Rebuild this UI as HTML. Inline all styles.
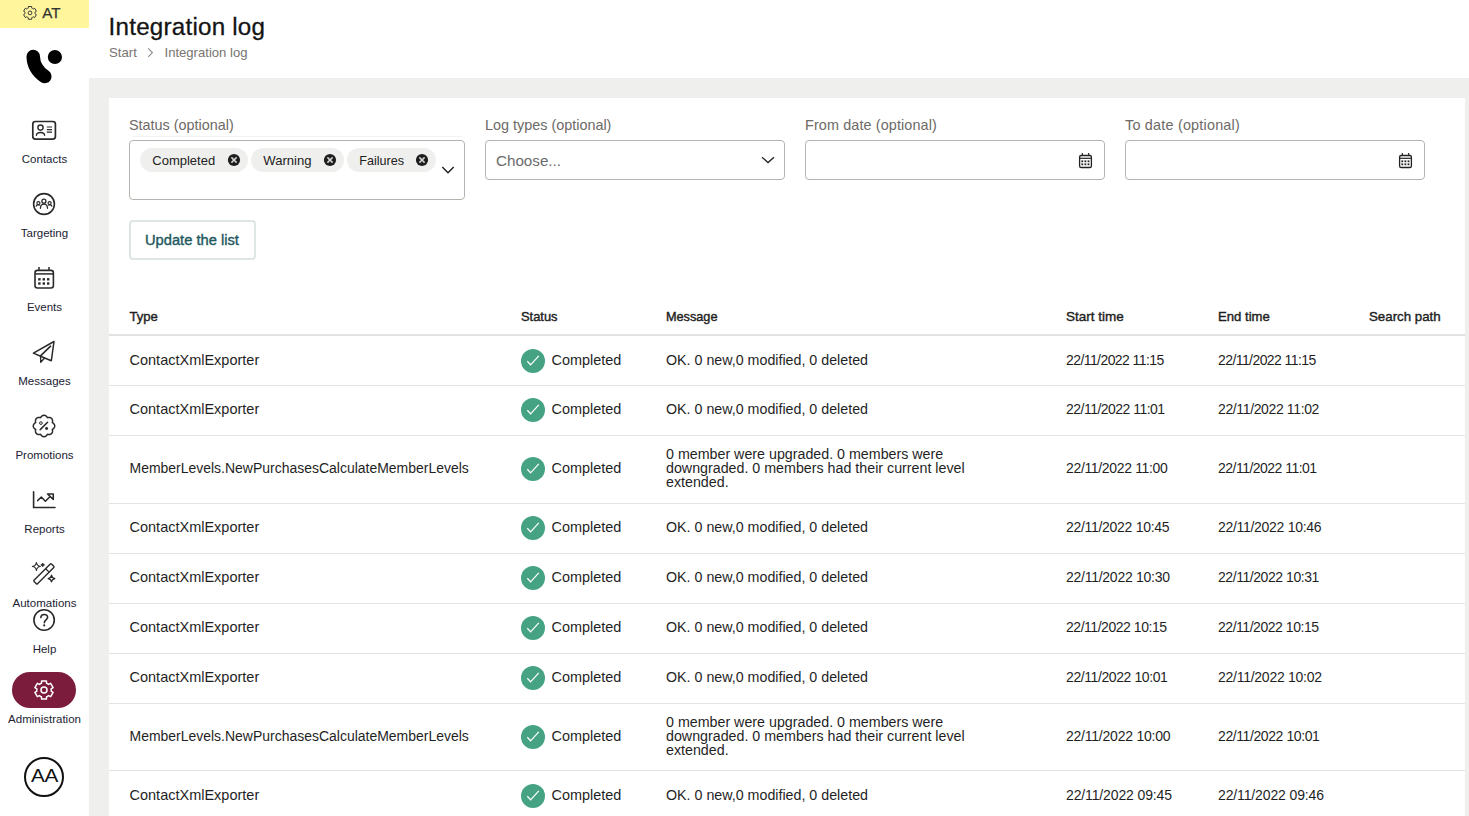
<!DOCTYPE html>
<html><head><meta charset="utf-8"><style>
html,body{margin:0;padding:0;}
body{width:1469px;height:816px;overflow:hidden;position:relative;background:#fff;font-family:"Liberation Sans", sans-serif;}
.t{position:absolute;white-space:nowrap;font-family:"Liberation Sans", sans-serif;}
svg{overflow:visible}
</style></head><body>
<div style="position:absolute;left:89px;top:78px;width:1380px;height:738px;background:#efefed"></div>
<div style="position:absolute;left:109px;top:98px;width:1356px;height:718px;background:#fff"></div>
<div style="position:absolute;left:0px;top:0px;width:89px;height:28px;background:#fff59d"></div>
<svg style="position:absolute;left:20px;top:3px;" width="20" height="20" viewBox="20 3 20 20"><path d="M28.21,8.23 L28.29,6.52 L31.71,6.52 L31.79,8.23 L32.03,8.33 L32.27,8.44 L32.50,8.57 L32.72,8.71 L32.94,8.85 L33.15,9.01 L34.67,8.23 L36.38,11.19 L34.94,12.12 L34.97,12.38 L34.99,12.64 L35.00,12.90 L34.99,13.16 L34.97,13.42 L34.94,13.68 L36.38,14.61 L34.67,17.57 L33.15,16.79 L32.94,16.95 L32.72,17.09 L32.50,17.23 L32.27,17.36 L32.03,17.47 L31.79,17.57 L31.71,19.28 L28.29,19.28 L28.21,17.57 L27.97,17.47 L27.73,17.36 L27.50,17.23 L27.28,17.09 L27.06,16.95 L26.85,16.79 L25.33,17.57 L23.62,14.61 L25.06,13.68 L25.03,13.42 L25.01,13.16 L25.00,12.90 L25.01,12.64 L25.03,12.38 L25.06,12.12 L23.62,11.19 L25.33,8.23 L26.85,9.01 L27.06,8.85 L27.28,8.71 L27.50,8.57 L27.73,8.44 L27.97,8.33 Z" fill="none" stroke="#3a3a3a" stroke-width="1.0" stroke-linejoin="round"/><circle cx="30" cy="12.9" r="1.9" fill="none" stroke="#3a3a3a" stroke-width="1.0"/></svg>
<div class="t" style="left:42.30px;top:4px;font-size:15.2px;line-height:17px;color:#333;font-weight:400;letter-spacing:0px;-webkit-text-stroke:0.25px #333">AT</div>
<svg style="position:absolute;left:20px;top:45px;" width="45" height="45" viewBox="20 45 45 45"><path d="M33.2,56.5 C33.5,66 38,72 44.8,76.5" stroke="#000" stroke-width="13.5" stroke-linecap="round" fill="none"/><circle cx="54.9" cy="57" r="7.1" fill="#000"/></svg>
<svg style="position:absolute;left:28px;top:116px;" width="34" height="30" viewBox="28 116 34 30"><rect x="32.8" y="121.5" width="22.6" height="17.6" rx="2.6" fill="none" stroke="#2a2a2a" stroke-width="1.7"/>
<circle cx="40.5" cy="127.6" r="2.6" fill="none" stroke="#2a2a2a" stroke-width="1.4"/>
<path d="M36.4,135.3 C36.6,131.5 44.4,131.5 44.6,135.3" fill="none" stroke="#2a2a2a" stroke-width="1.4" stroke-linecap="round"/>
<path d="M46.8,127 H52 M46.8,129.6 H52 M46.8,132.1 H52" stroke="#2a2a2a" stroke-width="1.1"/></svg>
<div class="t" style="left:0;width:89px;text-align:center;top:153px;font-size:11.5px;line-height:12px;color:#222233">Contacts</div>
<svg style="position:absolute;left:28px;top:188px;" width="34" height="34" viewBox="28 188 34 34"><circle cx="44" cy="204" r="10.4" fill="none" stroke="#2a2a2a" stroke-width="1.6"/>
<circle cx="43.9" cy="201.2" r="2.0" fill="none" stroke="#2a2a2a" stroke-width="1.3"/>
<path d="M40.4,208.3 C40.6,202.8 47.3,202.8 47.5,208.3" fill="none" stroke="#2a2a2a" stroke-width="1.3" stroke-linecap="round"/>
<circle cx="38.4" cy="203.1" r="1.55" fill="none" stroke="#2a2a2a" stroke-width="1.15"/>
<path d="M35.9,206.6 C36.3,205.2 37.2,204.6 38.6,204.6 L40.2,205.2" fill="none" stroke="#2a2a2a" stroke-width="1.15"/>
<circle cx="49.6" cy="203.1" r="1.55" fill="none" stroke="#2a2a2a" stroke-width="1.15"/>
<path d="M52.1,206.6 C51.7,205.2 50.8,204.6 49.4,204.6 L47.8,205.2" fill="none" stroke="#2a2a2a" stroke-width="1.15"/></svg>
<div class="t" style="left:0;width:89px;text-align:center;top:227px;font-size:11.5px;line-height:12px;color:#222233">Targeting</div>
<svg style="position:absolute;left:28px;top:262px;" width="34" height="32" viewBox="28 262 34 32"><rect x="35" y="270.4" width="18.4" height="17.6" rx="2.4" fill="none" stroke="#2a2a2a" stroke-width="1.6"/>
<path d="M35,273.9 H53.4" stroke="#2a2a2a" stroke-width="1.5"/>
<path d="M39,267 V271 M49,267 V271" stroke="#2a2a2a" stroke-width="1.5"/><rect x="38.199999999999996" y="278.1" width="2.4" height="2.4" fill="#2a2a2a"/><rect x="38.199999999999996" y="282.3" width="2.4" height="2.4" fill="#2a2a2a"/><rect x="42.599999999999994" y="278.1" width="2.4" height="2.4" fill="#2a2a2a"/><rect x="42.599999999999994" y="282.3" width="2.4" height="2.4" fill="#2a2a2a"/><rect x="47.0" y="278.1" width="2.4" height="2.4" fill="#2a2a2a"/><rect x="47.0" y="282.3" width="2.4" height="2.4" fill="#2a2a2a"/></svg>
<div class="t" style="left:0;width:89px;text-align:center;top:301px;font-size:11.5px;line-height:12px;color:#222233">Events</div>
<svg style="position:absolute;left:28px;top:336px;" width="34" height="32" viewBox="28 336 34 32"><path d="M54,341.5 L33.4,353.1 L40.6,356.2 L51.3,360.8 Z" fill="none" stroke="#2a2a2a" stroke-width="1.5" stroke-linejoin="round"/>
<path d="M50.6,346.2 L40.8,355.6" fill="none" stroke="#2a2a2a" stroke-width="1.6" stroke-linecap="round"/>
<path d="M40.6,356.2 L40.7,362.2 L44.4,358.3" fill="none" stroke="#2a2a2a" stroke-width="1.4" stroke-linejoin="round" stroke-linecap="round"/></svg>
<div class="t" style="left:0;width:89px;text-align:center;top:375px;font-size:11.5px;line-height:12px;color:#222233">Messages</div>
<svg style="position:absolute;left:28px;top:410px;" width="34" height="34" viewBox="28 410 34 34"><path d="M54.70,426.00 L54.70,426.09 L54.69,426.19 L54.69,426.28 L54.68,426.37 L54.66,426.47 L54.65,426.56 L54.63,426.65 L54.61,426.74 L54.58,426.83 L54.56,426.92 L54.53,427.01 L54.50,427.10 L54.46,427.19 L54.42,427.28 L54.38,427.37 L54.34,427.45 L54.30,427.54 L54.25,427.62 L54.20,427.71 L54.15,427.79 L54.09,427.87 L54.04,427.95 L53.98,428.03 L53.92,428.11 L53.85,428.18 L53.79,428.26 L53.72,428.33 L53.66,428.41 L53.59,428.48 L53.51,428.55 L53.44,428.62 L53.37,428.69 L53.29,428.75 L53.22,428.82 L53.14,428.88 L53.06,428.94 L52.98,429.00 L52.90,429.06 L52.82,429.12 L52.73,429.18 L52.65,429.23 L52.57,429.29 L52.48,429.34 L52.40,429.39 L52.31,429.44 L52.34,429.54 L52.36,429.64 L52.38,429.73 L52.40,429.83 L52.42,429.93 L52.44,430.03 L52.46,430.13 L52.47,430.22 L52.49,430.32 L52.50,430.42 L52.51,430.52 L52.52,430.62 L52.52,430.72 L52.53,430.82 L52.53,430.93 L52.53,431.03 L52.53,431.12 L52.53,431.22 L52.52,431.32 L52.51,431.42 L52.50,431.52 L52.49,431.62 L52.48,431.72 L52.46,431.81 L52.44,431.91 L52.42,432.00 L52.39,432.10 L52.37,432.19 L52.34,432.28 L52.31,432.38 L52.27,432.47 L52.24,432.55 L52.20,432.64 L52.16,432.73 L52.12,432.81 L52.07,432.90 L52.03,432.98 L51.98,433.06 L51.92,433.13 L51.87,433.21 L51.81,433.29 L51.75,433.36 L51.69,433.43 L51.63,433.50 L51.57,433.57 L51.50,433.63 L51.43,433.69 L51.36,433.75 L51.29,433.81 L51.21,433.87 L51.13,433.92 L51.06,433.98 L50.98,434.03 L50.90,434.07 L50.81,434.12 L50.73,434.16 L50.64,434.20 L50.55,434.24 L50.47,434.27 L50.38,434.31 L50.28,434.34 L50.19,434.37 L50.10,434.39 L50.00,434.42 L49.91,434.44 L49.81,434.46 L49.72,434.48 L49.62,434.49 L49.52,434.50 L49.42,434.51 L49.32,434.52 L49.22,434.53 L49.12,434.53 L49.03,434.53 L48.93,434.53 L48.82,434.53 L48.72,434.52 L48.62,434.52 L48.52,434.51 L48.42,434.50 L48.32,434.49 L48.22,434.47 L48.13,434.46 L48.03,434.44 L47.93,434.42 L47.83,434.40 L47.73,434.38 L47.64,434.36 L47.54,434.34 L47.44,434.31 L47.39,434.40 L47.34,434.48 L47.29,434.57 L47.23,434.65 L47.18,434.73 L47.12,434.82 L47.06,434.90 L47.00,434.98 L46.94,435.06 L46.88,435.14 L46.82,435.22 L46.75,435.29 L46.69,435.37 L46.62,435.44 L46.55,435.51 L46.48,435.59 L46.41,435.66 L46.33,435.72 L46.26,435.79 L46.18,435.85 L46.11,435.92 L46.03,435.98 L45.95,436.04 L45.87,436.09 L45.79,436.15 L45.71,436.20 L45.62,436.25 L45.54,436.30 L45.45,436.34 L45.37,436.38 L45.28,436.42 L45.19,436.46 L45.10,436.50 L45.01,436.53 L44.92,436.56 L44.83,436.58 L44.74,436.61 L44.65,436.63 L44.56,436.65 L44.47,436.66 L44.37,436.68 L44.28,436.69 L44.19,436.69 L44.09,436.70 L44.00,436.70 L43.91,436.70 L43.81,436.69 L43.72,436.69 L43.63,436.68 L43.53,436.66 L43.44,436.65 L43.35,436.63 L43.26,436.61 L43.17,436.58 L43.08,436.56 L42.99,436.53 L42.90,436.50 L42.81,436.46 L42.72,436.42 L42.63,436.38 L42.55,436.34 L42.46,436.30 L42.38,436.25 L42.29,436.20 L42.21,436.15 L42.13,436.09 L42.05,436.04 L41.97,435.98 L41.89,435.92 L41.82,435.85 L41.74,435.79 L41.67,435.72 L41.59,435.66 L41.52,435.59 L41.45,435.51 L41.38,435.44 L41.31,435.37 L41.25,435.29 L41.18,435.22 L41.12,435.14 L41.06,435.06 L41.00,434.98 L40.94,434.90 L40.88,434.82 L40.82,434.73 L40.77,434.65 L40.71,434.57 L40.66,434.48 L40.61,434.40 L40.56,434.31 L40.46,434.34 L40.36,434.36 L40.27,434.38 L40.17,434.40 L40.07,434.42 L39.97,434.44 L39.87,434.46 L39.78,434.47 L39.68,434.49 L39.58,434.50 L39.48,434.51 L39.38,434.52 L39.28,434.52 L39.18,434.53 L39.08,434.53 L38.97,434.53 L38.88,434.53 L38.78,434.53 L38.68,434.52 L38.58,434.51 L38.48,434.50 L38.38,434.49 L38.28,434.48 L38.19,434.46 L38.09,434.44 L38.00,434.42 L37.90,434.39 L37.81,434.37 L37.72,434.34 L37.62,434.31 L37.53,434.27 L37.45,434.24 L37.36,434.20 L37.27,434.16 L37.19,434.12 L37.10,434.07 L37.02,434.03 L36.94,433.98 L36.87,433.92 L36.79,433.87 L36.71,433.81 L36.64,433.75 L36.57,433.69 L36.50,433.63 L36.43,433.57 L36.37,433.50 L36.31,433.43 L36.25,433.36 L36.19,433.29 L36.13,433.21 L36.08,433.13 L36.02,433.06 L35.97,432.98 L35.93,432.90 L35.88,432.81 L35.84,432.73 L35.80,432.64 L35.76,432.55 L35.73,432.47 L35.69,432.38 L35.66,432.28 L35.63,432.19 L35.61,432.10 L35.58,432.00 L35.56,431.91 L35.54,431.81 L35.52,431.72 L35.51,431.62 L35.50,431.52 L35.49,431.42 L35.48,431.32 L35.47,431.22 L35.47,431.12 L35.47,431.03 L35.47,430.93 L35.47,430.82 L35.48,430.72 L35.48,430.62 L35.49,430.52 L35.50,430.42 L35.51,430.32 L35.53,430.22 L35.54,430.13 L35.56,430.03 L35.58,429.93 L35.60,429.83 L35.62,429.73 L35.64,429.64 L35.66,429.54 L35.69,429.44 L35.60,429.39 L35.52,429.34 L35.43,429.29 L35.35,429.23 L35.27,429.18 L35.18,429.12 L35.10,429.06 L35.02,429.00 L34.94,428.94 L34.86,428.88 L34.78,428.82 L34.71,428.75 L34.63,428.69 L34.56,428.62 L34.49,428.55 L34.41,428.48 L34.34,428.41 L34.28,428.33 L34.21,428.26 L34.15,428.18 L34.08,428.11 L34.02,428.03 L33.96,427.95 L33.91,427.87 L33.85,427.79 L33.80,427.71 L33.75,427.62 L33.70,427.54 L33.66,427.45 L33.62,427.37 L33.58,427.28 L33.54,427.19 L33.50,427.10 L33.47,427.01 L33.44,426.92 L33.42,426.83 L33.39,426.74 L33.37,426.65 L33.35,426.56 L33.34,426.47 L33.32,426.37 L33.31,426.28 L33.31,426.19 L33.30,426.09 L33.30,426.00 L33.30,425.91 L33.31,425.81 L33.31,425.72 L33.32,425.63 L33.34,425.53 L33.35,425.44 L33.37,425.35 L33.39,425.26 L33.42,425.17 L33.44,425.08 L33.47,424.99 L33.50,424.90 L33.54,424.81 L33.58,424.72 L33.62,424.63 L33.66,424.55 L33.70,424.46 L33.75,424.38 L33.80,424.29 L33.85,424.21 L33.91,424.13 L33.96,424.05 L34.02,423.97 L34.08,423.89 L34.15,423.82 L34.21,423.74 L34.28,423.67 L34.34,423.59 L34.41,423.52 L34.49,423.45 L34.56,423.38 L34.63,423.31 L34.71,423.25 L34.78,423.18 L34.86,423.12 L34.94,423.06 L35.02,423.00 L35.10,422.94 L35.18,422.88 L35.27,422.82 L35.35,422.77 L35.43,422.71 L35.52,422.66 L35.60,422.61 L35.69,422.56 L35.66,422.46 L35.64,422.36 L35.62,422.27 L35.60,422.17 L35.58,422.07 L35.56,421.97 L35.54,421.87 L35.53,421.78 L35.51,421.68 L35.50,421.58 L35.49,421.48 L35.48,421.38 L35.48,421.28 L35.47,421.18 L35.47,421.07 L35.47,420.97 L35.47,420.88 L35.47,420.78 L35.48,420.68 L35.49,420.58 L35.50,420.48 L35.51,420.38 L35.52,420.28 L35.54,420.19 L35.56,420.09 L35.58,420.00 L35.61,419.90 L35.63,419.81 L35.66,419.72 L35.69,419.62 L35.73,419.53 L35.76,419.45 L35.80,419.36 L35.84,419.27 L35.88,419.19 L35.93,419.10 L35.97,419.02 L36.02,418.94 L36.08,418.87 L36.13,418.79 L36.19,418.71 L36.25,418.64 L36.31,418.57 L36.37,418.50 L36.43,418.43 L36.50,418.37 L36.57,418.31 L36.64,418.25 L36.71,418.19 L36.79,418.13 L36.87,418.08 L36.94,418.02 L37.02,417.97 L37.10,417.93 L37.19,417.88 L37.27,417.84 L37.36,417.80 L37.45,417.76 L37.53,417.73 L37.62,417.69 L37.72,417.66 L37.81,417.63 L37.90,417.61 L38.00,417.58 L38.09,417.56 L38.19,417.54 L38.28,417.52 L38.38,417.51 L38.48,417.50 L38.58,417.49 L38.68,417.48 L38.78,417.47 L38.88,417.47 L38.97,417.47 L39.07,417.47 L39.18,417.47 L39.28,417.48 L39.38,417.48 L39.48,417.49 L39.58,417.50 L39.68,417.51 L39.78,417.53 L39.87,417.54 L39.97,417.56 L40.07,417.58 L40.17,417.60 L40.27,417.62 L40.36,417.64 L40.46,417.66 L40.56,417.69 L40.61,417.60 L40.66,417.52 L40.71,417.43 L40.77,417.35 L40.82,417.27 L40.88,417.18 L40.94,417.10 L41.00,417.02 L41.06,416.94 L41.12,416.86 L41.18,416.78 L41.25,416.71 L41.31,416.63 L41.38,416.56 L41.45,416.49 L41.52,416.41 L41.59,416.34 L41.67,416.28 L41.74,416.21 L41.82,416.15 L41.89,416.08 L41.97,416.02 L42.05,415.96 L42.13,415.91 L42.21,415.85 L42.29,415.80 L42.38,415.75 L42.46,415.70 L42.55,415.66 L42.63,415.62 L42.72,415.58 L42.81,415.54 L42.90,415.50 L42.99,415.47 L43.08,415.44 L43.17,415.42 L43.26,415.39 L43.35,415.37 L43.44,415.35 L43.53,415.34 L43.63,415.32 L43.72,415.31 L43.81,415.31 L43.91,415.30 L44.00,415.30 L44.09,415.30 L44.19,415.31 L44.28,415.31 L44.37,415.32 L44.47,415.34 L44.56,415.35 L44.65,415.37 L44.74,415.39 L44.83,415.42 L44.92,415.44 L45.01,415.47 L45.10,415.50 L45.19,415.54 L45.28,415.58 L45.37,415.62 L45.45,415.66 L45.54,415.70 L45.62,415.75 L45.71,415.80 L45.79,415.85 L45.87,415.91 L45.95,415.96 L46.03,416.02 L46.11,416.08 L46.18,416.15 L46.26,416.21 L46.33,416.28 L46.41,416.34 L46.48,416.41 L46.55,416.49 L46.62,416.56 L46.69,416.63 L46.75,416.71 L46.82,416.78 L46.88,416.86 L46.94,416.94 L47.00,417.02 L47.06,417.10 L47.12,417.18 L47.18,417.27 L47.23,417.35 L47.29,417.43 L47.34,417.52 L47.39,417.60 L47.44,417.69 L47.54,417.66 L47.64,417.64 L47.73,417.62 L47.83,417.60 L47.93,417.58 L48.03,417.56 L48.13,417.54 L48.22,417.53 L48.32,417.51 L48.42,417.50 L48.52,417.49 L48.62,417.48 L48.72,417.48 L48.82,417.47 L48.93,417.47 L49.03,417.47 L49.12,417.47 L49.22,417.47 L49.32,417.48 L49.42,417.49 L49.52,417.50 L49.62,417.51 L49.72,417.52 L49.81,417.54 L49.91,417.56 L50.00,417.58 L50.10,417.61 L50.19,417.63 L50.28,417.66 L50.38,417.69 L50.47,417.73 L50.55,417.76 L50.64,417.80 L50.73,417.84 L50.81,417.88 L50.90,417.93 L50.98,417.97 L51.06,418.02 L51.13,418.08 L51.21,418.13 L51.29,418.19 L51.36,418.25 L51.43,418.31 L51.50,418.37 L51.57,418.43 L51.63,418.50 L51.69,418.57 L51.75,418.64 L51.81,418.71 L51.87,418.79 L51.92,418.87 L51.98,418.94 L52.03,419.02 L52.07,419.10 L52.12,419.19 L52.16,419.27 L52.20,419.36 L52.24,419.45 L52.27,419.53 L52.31,419.62 L52.34,419.72 L52.37,419.81 L52.39,419.90 L52.42,420.00 L52.44,420.09 L52.46,420.19 L52.48,420.28 L52.49,420.38 L52.50,420.48 L52.51,420.58 L52.52,420.68 L52.53,420.78 L52.53,420.88 L52.53,420.97 L52.53,421.07 L52.53,421.18 L52.52,421.28 L52.52,421.38 L52.51,421.48 L52.50,421.58 L52.49,421.68 L52.47,421.78 L52.46,421.87 L52.44,421.97 L52.42,422.07 L52.40,422.17 L52.38,422.27 L52.36,422.36 L52.34,422.46 L52.31,422.56 L52.40,422.61 L52.48,422.66 L52.57,422.71 L52.65,422.77 L52.73,422.82 L52.82,422.88 L52.90,422.94 L52.98,423.00 L53.06,423.06 L53.14,423.12 L53.22,423.18 L53.29,423.25 L53.37,423.31 L53.44,423.38 L53.51,423.45 L53.59,423.52 L53.66,423.59 L53.72,423.67 L53.79,423.74 L53.85,423.82 L53.92,423.89 L53.98,423.97 L54.04,424.05 L54.09,424.13 L54.15,424.21 L54.20,424.29 L54.25,424.38 L54.30,424.46 L54.34,424.55 L54.38,424.63 L54.42,424.72 L54.46,424.81 L54.50,424.90 L54.53,424.99 L54.56,425.08 L54.58,425.17 L54.61,425.26 L54.63,425.35 L54.65,425.44 L54.66,425.53 L54.68,425.63 L54.69,425.72 L54.69,425.81 L54.70,425.91 L54.70,426.00Z" fill="none" stroke="#2a2a2a" stroke-width="1.5" stroke-linejoin="round"/>
<path d="M40.2,429.6 L47.6,422.2" stroke="#2a2a2a" stroke-width="1.5" stroke-linecap="round"/>
<circle cx="40.9" cy="423.1" r="1.35" fill="none" stroke="#2a2a2a" stroke-width="1.0"/>
<circle cx="46.6" cy="428.5" r="1.45" fill="#2a2a2a"/></svg>
<div class="t" style="left:0;width:89px;text-align:center;top:449px;font-size:11.5px;line-height:12px;color:#222233">Promotions</div>
<svg style="position:absolute;left:28px;top:484px;" width="34" height="30" viewBox="28 484 34 30"><path d="M33.6,491.8 V507.5 H55" fill="none" stroke="#2a2a2a" stroke-width="1.6" stroke-linecap="round"/>
<path d="M37.6,500.6 L41.3,497 L45.4,501.3 L49.6,497" fill="none" stroke="#2a2a2a" stroke-width="1.5" stroke-linejoin="round" stroke-linecap="round"/>
<path d="M47.5,494 H53.3 V499.4 Z" fill="none" stroke="#2a2a2a" stroke-width="1.5" stroke-linejoin="round"/></svg>
<div class="t" style="left:0;width:89px;text-align:center;top:523px;font-size:11.5px;line-height:12px;color:#222233">Reports</div>
<svg style="position:absolute;left:28px;top:558px;" width="34" height="30" viewBox="28 558 34 30"><g transform="rotate(-45 43.9 573.9)"><rect x="31.6" y="571.45" width="24.6" height="4.9" rx="0.8" fill="none" stroke="#2a2a2a" stroke-width="1.4"/><path d="M48.85,571.45 V576.35" stroke="#2a2a2a" stroke-width="1.3"/></g>
<path d="M36.4,562.5 Q36.879999999999995,566.02 40.4,566.5 Q36.879999999999995,566.98 36.4,570.5 Q35.92,566.98 32.4,566.5 Q35.92,566.02 36.4,562.5Z" fill="none" stroke="#2a2a2a" stroke-width="1.2" stroke-linejoin="round"/><path d="M42.7,563.0 Q42.928000000000004,564.672 44.6,564.9 Q42.928000000000004,565.1279999999999 42.7,566.8 Q42.472,565.1279999999999 40.800000000000004,564.9 Q42.472,564.672 42.7,563.0Z" fill="#2a2a2a" stroke="#2a2a2a" stroke-width="0.9" stroke-linejoin="round"/><path d="M51.5,575.2 Q51.908,578.192 54.9,578.6 Q51.908,579.008 51.5,582.0 Q51.092,579.008 48.1,578.6 Q51.092,578.192 51.5,575.2Z" fill="none" stroke="#2a2a2a" stroke-width="1.2" stroke-linejoin="round"/></svg>
<div class="t" style="left:0;width:89px;text-align:center;top:597px;font-size:11.5px;line-height:12px;color:#222233">Automations</div>
<svg style="position:absolute;left:28px;top:604px;" width="34" height="32" viewBox="28 604 34 32"><circle cx="44.1" cy="620" r="10.2" fill="none" stroke="#2a2a2a" stroke-width="1.6"/>
<path d="M40.9,617.6 C40.9,613.6 47.6,613.6 47.6,617.3 C47.6,619.6 44.3,620.3 44.3,622.8" fill="none" stroke="#2a2a2a" stroke-width="1.6" stroke-linecap="round"/>
<circle cx="44.2" cy="625.4" r="1.05" fill="#2a2a2a"/></svg>
<div class="t" style="left:0;width:89px;text-align:center;top:643px;font-size:11.5px;line-height:12px;color:#222233">Help</div>
<div style="position:absolute;left:12px;top:672px;width:64px;height:36px;background:#7b1c3c;border-radius:18px"></div>
<svg style="position:absolute;left:30px;top:676px;" width="28" height="28" viewBox="30 676 28 28"><path d="M41.42,683.28 L41.57,680.92 L46.43,680.92 L46.58,683.28 L46.93,683.42 L47.27,683.58 L47.60,683.76 L47.92,683.96 L48.23,684.18 L48.53,684.40 L50.65,683.35 L53.08,687.57 L51.11,688.87 L51.16,689.25 L51.19,689.62 L51.20,690.00 L51.19,690.38 L51.16,690.75 L51.11,691.13 L53.08,692.43 L50.65,696.65 L48.53,695.60 L48.23,695.82 L47.92,696.04 L47.60,696.24 L47.27,696.42 L46.93,696.58 L46.58,696.72 L46.43,699.08 L41.57,699.08 L41.42,696.72 L41.07,696.58 L40.73,696.42 L40.40,696.24 L40.08,696.04 L39.77,695.82 L39.47,695.60 L37.35,696.65 L34.92,692.43 L36.89,691.13 L36.84,690.75 L36.81,690.38 L36.80,690.00 L36.81,689.62 L36.84,689.25 L36.89,688.87 L34.92,687.57 L37.35,683.35 L39.47,684.40 L39.77,684.18 L40.08,683.96 L40.40,683.76 L40.73,683.58 L41.07,683.42 Z" fill="none" stroke="#fff" stroke-width="1.5" stroke-linejoin="round"/><circle cx="44" cy="690" r="3.0" fill="none" stroke="#fff" stroke-width="1.5"/></svg>
<div class="t" style="left:0;width:89px;text-align:center;top:713px;font-size:11.5px;line-height:12px;color:#222233">Administration</div>
<div style="position:absolute;left:24px;top:757px;width:36px;height:36px;border:2px solid #111;border-radius:50%"></div>
<div class="t" style="left:30.50px;top:765px;font-size:18.5px;line-height:21px;color:#111;font-weight:400;letter-spacing:-0.3px;transform:scaleX(1.12);transform-origin:0 0">AA</div>
<div class="t" style="left:108.60px;top:13px;font-size:24.2px;line-height:27px;color:#141414;font-weight:400;letter-spacing:0.22px;-webkit-text-stroke:0.3px #141414">Integration log</div>
<div class="t" style="left:109.00px;top:45px;font-size:13.2px;line-height:15px;color:#787470;font-weight:400;letter-spacing:0px;">Start</div>
<svg style="position:absolute;left:144px;top:44px;" width="14" height="16" viewBox="144 44 14 16"><path d="M148.2,48.3 L152.4,52.6 L148.2,56.9" fill="none" stroke="#8a8a8a" stroke-width="1.1"/></svg>
<div class="t" style="left:164.50px;top:45px;font-size:13.1px;line-height:15px;color:#787470;font-weight:400;letter-spacing:0px;">Integration log</div>
<div class="t" style="left:129.00px;top:117px;font-size:14.4px;line-height:16px;color:#6d6a66;font-weight:400;letter-spacing:0px;">Status (optional)</div>
<div class="t" style="left:485.00px;top:117px;font-size:14.4px;line-height:16px;color:#6d6a66;font-weight:400;letter-spacing:0px;">Log types (optional)</div>
<div class="t" style="left:805.00px;top:117px;font-size:14.4px;line-height:16px;color:#6d6a66;font-weight:400;letter-spacing:0.12px;">From date (optional)</div>
<div class="t" style="left:1125.00px;top:117px;font-size:14.4px;line-height:16px;color:#6d6a66;font-weight:400;letter-spacing:0.21px;">To date (optional)</div>
<div style="position:absolute;left:132px;top:136px;width:330px;height:1px;background:#f3f3f3"></div>
<div style="position:absolute;left:129px;top:140px;width:334px;height:58px;border:1px solid #b4b4ae;border-radius:4px"></div>
<div style="position:absolute;left:140px;top:148px;width:108px;height:24px;background:#efefed;border-radius:12px"></div>
<div class="t" style="left:152.30px;top:153px;font-size:13.0px;line-height:15px;color:#222;font-weight:400;letter-spacing:0px;">Completed</div>
<svg style="position:absolute;left:227px;top:153px;" width="14" height="14" viewBox="227 153 14 14"><circle cx="234" cy="160" r="6.1" fill="#1e1e1e"/><path d="M231.4,157.4 L236.6,162.6 M236.6,157.4 L231.4,162.6" stroke="#d4d4d4" stroke-width="1.5"/></svg>
<div style="position:absolute;left:251px;top:148px;width:93px;height:24px;background:#efefed;border-radius:12px"></div>
<div class="t" style="left:263.30px;top:153px;font-size:13.1px;line-height:15px;color:#222;font-weight:400;letter-spacing:0px;">Warning</div>
<svg style="position:absolute;left:323px;top:153px;" width="14" height="14" viewBox="323 153 14 14"><circle cx="330" cy="160" r="6.1" fill="#1e1e1e"/><path d="M327.4,157.4 L332.6,162.6 M332.6,157.4 L327.4,162.6" stroke="#d4d4d4" stroke-width="1.5"/></svg>
<div style="position:absolute;left:347px;top:148px;width:89px;height:24px;background:#efefed;border-radius:12px"></div>
<div class="t" style="left:359.30px;top:154px;font-size:12.6px;line-height:14px;color:#222;font-weight:400;letter-spacing:0px;">Failures</div>
<svg style="position:absolute;left:415px;top:153px;" width="14" height="14" viewBox="415 153 14 14"><circle cx="422" cy="160" r="6.1" fill="#1e1e1e"/><path d="M419.4,157.4 L424.6,162.6 M424.6,157.4 L419.4,162.6" stroke="#d4d4d4" stroke-width="1.5"/></svg>
<svg style="position:absolute;left:440px;top:162px;" width="16" height="14" viewBox="440 162 16 14"><path d="M442.3,167 L448,172.8 L453.7,167" fill="none" stroke="#222" stroke-width="1.4"/></svg>
<div style="position:absolute;left:485px;top:140px;width:298px;height:38px;border:1px solid #b4b4ae;border-radius:4px"></div>
<div class="t" style="left:496.00px;top:152px;font-size:15.2px;line-height:17px;color:#6b6b6b;font-weight:400;letter-spacing:0px;">Choose...</div>
<svg style="position:absolute;left:758px;top:152px;" width="20" height="14" viewBox="758 152 20 14"><path d="M762,157.2 L768,162.6 L774,157.2" fill="none" stroke="#222" stroke-width="1.3"/></svg>
<div style="position:absolute;left:805px;top:140px;width:298px;height:38px;border:1px solid #b4b4ae;border-radius:4px"></div>
<svg style="position:absolute;left:1077px;top:150px;" width="16" height="20" viewBox="1077 150 16 20"><rect x="1079.6" y="155.5" width="11.8" height="12" rx="1.6" fill="none" stroke="#222" stroke-width="1.3"/><path d="M1079.6,158.3 H1091.4" stroke="#222" stroke-width="1.2"/><path d="M1082.3,153 V156 M1088.7,153 V156" stroke="#222" stroke-width="1.2"/><rect x="1081.3999999999999" y="160.4" width="1.8" height="1.8" fill="#222"/><rect x="1081.3999999999999" y="163.4" width="1.8" height="1.8" fill="#222"/><rect x="1084.5" y="160.4" width="1.8" height="1.8" fill="#222"/><rect x="1084.5" y="163.4" width="1.8" height="1.8" fill="#222"/><rect x="1087.6" y="160.4" width="1.8" height="1.8" fill="#222"/><rect x="1087.6" y="163.4" width="1.8" height="1.8" fill="#222"/></svg>
<div style="position:absolute;left:1125px;top:140px;width:298px;height:38px;border:1px solid #b4b4ae;border-radius:4px"></div>
<svg style="position:absolute;left:1397px;top:150px;" width="16" height="20" viewBox="1397 150 16 20"><rect x="1399.6" y="155.5" width="11.8" height="12" rx="1.6" fill="none" stroke="#222" stroke-width="1.3"/><path d="M1399.6,158.3 H1411.4" stroke="#222" stroke-width="1.2"/><path d="M1402.3,153 V156 M1408.7,153 V156" stroke="#222" stroke-width="1.2"/><rect x="1401.3999999999999" y="160.4" width="1.8" height="1.8" fill="#222"/><rect x="1401.3999999999999" y="163.4" width="1.8" height="1.8" fill="#222"/><rect x="1404.5" y="160.4" width="1.8" height="1.8" fill="#222"/><rect x="1404.5" y="163.4" width="1.8" height="1.8" fill="#222"/><rect x="1407.6" y="160.4" width="1.8" height="1.8" fill="#222"/><rect x="1407.6" y="163.4" width="1.8" height="1.8" fill="#222"/></svg>
<div style="position:absolute;left:129px;top:220px;width:123px;height:36px;border:2px solid #dde6e4;border-radius:4px"></div>
<div class="t" style="left:145.00px;top:232px;font-size:14.7px;line-height:16px;color:#1f5960;font-weight:400;letter-spacing:0px;-webkit-text-stroke:0.4px #1f5960">Update the list</div>
<div class="t" style="left:129.50px;top:309px;font-size:13.1px;line-height:15px;color:#1e1e1e;font-weight:400;letter-spacing:0px;-webkit-text-stroke:0.4px #1e1e1e">Type</div>
<div class="t" style="left:521.00px;top:309px;font-size:12.9px;line-height:15px;color:#1e1e1e;font-weight:400;letter-spacing:0px;-webkit-text-stroke:0.4px #1e1e1e">Status</div>
<div class="t" style="left:666.00px;top:310px;font-size:12.7px;line-height:14px;color:#1e1e1e;font-weight:400;letter-spacing:0px;-webkit-text-stroke:0.4px #1e1e1e">Message</div>
<div class="t" style="left:1066.00px;top:309px;font-size:13.5px;line-height:15px;color:#1e1e1e;font-weight:400;letter-spacing:0px;-webkit-text-stroke:0.4px #1e1e1e">Start time</div>
<div class="t" style="left:1218.00px;top:309px;font-size:13.15px;line-height:15px;color:#1e1e1e;font-weight:400;letter-spacing:0px;-webkit-text-stroke:0.4px #1e1e1e">End time</div>
<div class="t" style="left:1369.00px;top:309px;font-size:13.3px;line-height:15px;color:#1e1e1e;font-weight:400;letter-spacing:0px;-webkit-text-stroke:0.4px #1e1e1e">Search path</div>
<div style="position:absolute;left:109px;top:334px;width:1356px;height:2px;background:#e2e2e2"></div>
<div class="t" style="left:129.50px;top:352px;font-size:14.5px;line-height:16px;color:#1f1f1f;font-weight:400;letter-spacing:0px;">ContactXmlExporter</div>
<svg style="position:absolute;left:519px;top:347px;" width="28" height="28" viewBox="519 347 28 28"><circle cx="533" cy="361" r="12" fill="#45a383"/><path d="M527.3,361.3 L530.6,364.8 L538.8,355.9" fill="none" stroke="#fff" stroke-width="1.25"/></svg>
<div class="t" style="left:551.50px;top:352px;font-size:14.45px;line-height:16px;color:#1f1f1f;font-weight:400;letter-spacing:0px;">Completed</div>
<div class="t" style="left:666.00px;top:352px;font-size:14.25px;line-height:16px;color:#1f1f1f;font-weight:400;letter-spacing:0px;">OK. 0 new,0 modified, 0 deleted</div>
<div class="t" style="left:1066.00px;top:352px;font-size:14.0px;line-height:16px;color:#1f1f1f;font-weight:400;letter-spacing:-0.575px;">22/11/2022 11:15</div>
<div class="t" style="left:1218.00px;top:352px;font-size:14.0px;line-height:16px;color:#1f1f1f;font-weight:400;letter-spacing:-0.575px;">22/11/2022 11:15</div>
<div style="position:absolute;left:109px;top:385px;width:1356px;height:1px;background:#e3e3e3"></div>
<div class="t" style="left:129.50px;top:401px;font-size:14.5px;line-height:16px;color:#1f1f1f;font-weight:400;letter-spacing:0px;">ContactXmlExporter</div>
<svg style="position:absolute;left:519px;top:396px;" width="28" height="28" viewBox="519 396 28 28"><circle cx="533" cy="410" r="12" fill="#45a383"/><path d="M527.3,410.3 L530.6,413.8 L538.8,404.9" fill="none" stroke="#fff" stroke-width="1.25"/></svg>
<div class="t" style="left:551.50px;top:401px;font-size:14.45px;line-height:16px;color:#1f1f1f;font-weight:400;letter-spacing:0px;">Completed</div>
<div class="t" style="left:666.00px;top:401px;font-size:14.25px;line-height:16px;color:#1f1f1f;font-weight:400;letter-spacing:0px;">OK. 0 new,0 modified, 0 deleted</div>
<div class="t" style="left:1066.00px;top:401px;font-size:14.0px;line-height:16px;color:#1f1f1f;font-weight:400;letter-spacing:-0.518px;">22/11/2022 11:01</div>
<div class="t" style="left:1218.00px;top:401px;font-size:14.0px;line-height:16px;color:#1f1f1f;font-weight:400;letter-spacing:-0.371px;">22/11/2022 11:02</div>
<div style="position:absolute;left:109px;top:435px;width:1356px;height:1px;background:#e3e3e3"></div>
<div class="t" style="left:129.50px;top:460px;font-size:13.98px;line-height:16px;color:#1f1f1f;font-weight:400;letter-spacing:0px;">MemberLevels.NewPurchasesCalculateMemberLevels</div>
<svg style="position:absolute;left:519px;top:455px;" width="28" height="28" viewBox="519 455 28 28"><circle cx="533" cy="469" r="12" fill="#45a383"/><path d="M527.3,469.3 L530.6,472.8 L538.8,463.9" fill="none" stroke="#fff" stroke-width="1.25"/></svg>
<div class="t" style="left:551.50px;top:460px;font-size:14.45px;line-height:16px;color:#1f1f1f;font-weight:400;letter-spacing:0px;">Completed</div>
<div class="t" style="left:666.00px;top:446px;font-size:14.25px;line-height:16px;color:#1f1f1f;font-weight:400;letter-spacing:0px;">0 member were upgraded. 0 members were</div>
<div class="t" style="left:666.00px;top:460px;font-size:14.25px;line-height:16px;color:#1f1f1f;font-weight:400;letter-spacing:0px;">downgraded. 0 members had their current level</div>
<div class="t" style="left:666.00px;top:474px;font-size:14.25px;line-height:16px;color:#1f1f1f;font-weight:400;letter-spacing:0px;">extended.</div>
<div class="t" style="left:1066.00px;top:460px;font-size:14.0px;line-height:16px;color:#1f1f1f;font-weight:400;letter-spacing:-0.338px;">22/11/2022 11:00</div>
<div class="t" style="left:1218.00px;top:460px;font-size:14.0px;line-height:16px;color:#1f1f1f;font-weight:400;letter-spacing:-0.518px;">22/11/2022 11:01</div>
<div style="position:absolute;left:109px;top:503px;width:1356px;height:1px;background:#e3e3e3"></div>
<div class="t" style="left:129.50px;top:519px;font-size:14.5px;line-height:16px;color:#1f1f1f;font-weight:400;letter-spacing:0px;">ContactXmlExporter</div>
<svg style="position:absolute;left:519px;top:514px;" width="28" height="28" viewBox="519 514 28 28"><circle cx="533" cy="528" r="12" fill="#45a383"/><path d="M527.3,528.3 L530.6,531.8 L538.8,522.9" fill="none" stroke="#fff" stroke-width="1.25"/></svg>
<div class="t" style="left:551.50px;top:519px;font-size:14.45px;line-height:16px;color:#1f1f1f;font-weight:400;letter-spacing:0px;">Completed</div>
<div class="t" style="left:666.00px;top:519px;font-size:14.25px;line-height:16px;color:#1f1f1f;font-weight:400;letter-spacing:0px;">OK. 0 new,0 modified, 0 deleted</div>
<div class="t" style="left:1066.00px;top:519px;font-size:14.0px;line-height:16px;color:#1f1f1f;font-weight:400;letter-spacing:-0.297px;">22/11/2022 10:45</div>
<div class="t" style="left:1218.00px;top:519px;font-size:14.0px;line-height:16px;color:#1f1f1f;font-weight:400;letter-spacing:-0.297px;">22/11/2022 10:46</div>
<div style="position:absolute;left:109px;top:553px;width:1356px;height:1px;background:#e3e3e3"></div>
<div class="t" style="left:129.50px;top:569px;font-size:14.5px;line-height:16px;color:#1f1f1f;font-weight:400;letter-spacing:0px;">ContactXmlExporter</div>
<svg style="position:absolute;left:519px;top:564px;" width="28" height="28" viewBox="519 564 28 28"><circle cx="533" cy="578" r="12" fill="#45a383"/><path d="M527.3,578.3 L530.6,581.8 L538.8,572.9" fill="none" stroke="#fff" stroke-width="1.25"/></svg>
<div class="t" style="left:551.50px;top:569px;font-size:14.45px;line-height:16px;color:#1f1f1f;font-weight:400;letter-spacing:0px;">Completed</div>
<div class="t" style="left:666.00px;top:569px;font-size:14.25px;line-height:16px;color:#1f1f1f;font-weight:400;letter-spacing:0px;">OK. 0 new,0 modified, 0 deleted</div>
<div class="t" style="left:1066.00px;top:569px;font-size:14.0px;line-height:16px;color:#1f1f1f;font-weight:400;letter-spacing:-0.26px;">22/11/2022 10:30</div>
<div class="t" style="left:1218.00px;top:569px;font-size:14.0px;line-height:16px;color:#1f1f1f;font-weight:400;letter-spacing:-0.44px;">22/11/2022 10:31</div>
<div style="position:absolute;left:109px;top:603px;width:1356px;height:1px;background:#e3e3e3"></div>
<div class="t" style="left:129.50px;top:619px;font-size:14.5px;line-height:16px;color:#1f1f1f;font-weight:400;letter-spacing:0px;">ContactXmlExporter</div>
<svg style="position:absolute;left:519px;top:614px;" width="28" height="28" viewBox="519 614 28 28"><circle cx="533" cy="628" r="12" fill="#45a383"/><path d="M527.3,628.3 L530.6,631.8 L538.8,622.9" fill="none" stroke="#fff" stroke-width="1.25"/></svg>
<div class="t" style="left:551.50px;top:619px;font-size:14.45px;line-height:16px;color:#1f1f1f;font-weight:400;letter-spacing:0px;">Completed</div>
<div class="t" style="left:666.00px;top:619px;font-size:14.25px;line-height:16px;color:#1f1f1f;font-weight:400;letter-spacing:0px;">OK. 0 new,0 modified, 0 deleted</div>
<div class="t" style="left:1066.00px;top:619px;font-size:14.0px;line-height:16px;color:#1f1f1f;font-weight:400;letter-spacing:-0.464px;">22/11/2022 10:15</div>
<div class="t" style="left:1218.00px;top:619px;font-size:14.0px;line-height:16px;color:#1f1f1f;font-weight:400;letter-spacing:-0.464px;">22/11/2022 10:15</div>
<div style="position:absolute;left:109px;top:653px;width:1356px;height:1px;background:#e3e3e3"></div>
<div class="t" style="left:129.50px;top:669px;font-size:14.5px;line-height:16px;color:#1f1f1f;font-weight:400;letter-spacing:0px;">ContactXmlExporter</div>
<svg style="position:absolute;left:519px;top:664px;" width="28" height="28" viewBox="519 664 28 28"><circle cx="533" cy="678" r="12" fill="#45a383"/><path d="M527.3,678.3 L530.6,681.8 L538.8,672.9" fill="none" stroke="#fff" stroke-width="1.25"/></svg>
<div class="t" style="left:551.50px;top:669px;font-size:14.45px;line-height:16px;color:#1f1f1f;font-weight:400;letter-spacing:0px;">Completed</div>
<div class="t" style="left:666.00px;top:669px;font-size:14.25px;line-height:16px;color:#1f1f1f;font-weight:400;letter-spacing:0px;">OK. 0 new,0 modified, 0 deleted</div>
<div class="t" style="left:1066.00px;top:669px;font-size:14.0px;line-height:16px;color:#1f1f1f;font-weight:400;letter-spacing:-0.407px;">22/11/2022 10:01</div>
<div class="t" style="left:1218.00px;top:669px;font-size:14.0px;line-height:16px;color:#1f1f1f;font-weight:400;letter-spacing:-0.26px;">22/11/2022 10:02</div>
<div style="position:absolute;left:109px;top:703px;width:1356px;height:1px;background:#e3e3e3"></div>
<div class="t" style="left:129.50px;top:728px;font-size:13.98px;line-height:16px;color:#1f1f1f;font-weight:400;letter-spacing:0px;">MemberLevels.NewPurchasesCalculateMemberLevels</div>
<svg style="position:absolute;left:519px;top:723px;" width="28" height="28" viewBox="519 723 28 28"><circle cx="533" cy="737" r="12" fill="#45a383"/><path d="M527.3,737.3 L530.6,740.8 L538.8,731.9" fill="none" stroke="#fff" stroke-width="1.25"/></svg>
<div class="t" style="left:551.50px;top:728px;font-size:14.45px;line-height:16px;color:#1f1f1f;font-weight:400;letter-spacing:0px;">Completed</div>
<div class="t" style="left:666.00px;top:714px;font-size:14.25px;line-height:16px;color:#1f1f1f;font-weight:400;letter-spacing:0px;">0 member were upgraded. 0 members were</div>
<div class="t" style="left:666.00px;top:728px;font-size:14.25px;line-height:16px;color:#1f1f1f;font-weight:400;letter-spacing:0px;">downgraded. 0 members had their current level</div>
<div class="t" style="left:666.00px;top:742px;font-size:14.25px;line-height:16px;color:#1f1f1f;font-weight:400;letter-spacing:0px;">extended.</div>
<div class="t" style="left:1066.00px;top:728px;font-size:14.0px;line-height:16px;color:#1f1f1f;font-weight:400;letter-spacing:-0.227px;">22/11/2022 10:00</div>
<div class="t" style="left:1218.00px;top:728px;font-size:14.0px;line-height:16px;color:#1f1f1f;font-weight:400;letter-spacing:-0.407px;">22/11/2022 10:01</div>
<div style="position:absolute;left:109px;top:770px;width:1356px;height:1px;background:#e3e3e3"></div>
<div class="t" style="left:129.50px;top:787px;font-size:14.5px;line-height:16px;color:#1f1f1f;font-weight:400;letter-spacing:0px;">ContactXmlExporter</div>
<svg style="position:absolute;left:519px;top:782px;" width="28" height="28" viewBox="519 782 28 28"><circle cx="533" cy="796" r="12" fill="#45a383"/><path d="M527.3,796.3 L530.6,799.8 L538.8,790.9" fill="none" stroke="#fff" stroke-width="1.25"/></svg>
<div class="t" style="left:551.50px;top:787px;font-size:14.45px;line-height:16px;color:#1f1f1f;font-weight:400;letter-spacing:0px;">Completed</div>
<div class="t" style="left:666.00px;top:787px;font-size:14.25px;line-height:16px;color:#1f1f1f;font-weight:400;letter-spacing:0px;">OK. 0 new,0 modified, 0 deleted</div>
<div class="t" style="left:1066.00px;top:787px;font-size:14.0px;line-height:16px;color:#1f1f1f;font-weight:400;letter-spacing:-0.13px;">22/11/2022 09:45</div>
<div class="t" style="left:1218.00px;top:787px;font-size:14.0px;line-height:16px;color:#1f1f1f;font-weight:400;letter-spacing:-0.13px;">22/11/2022 09:46</div>
</body></html>
